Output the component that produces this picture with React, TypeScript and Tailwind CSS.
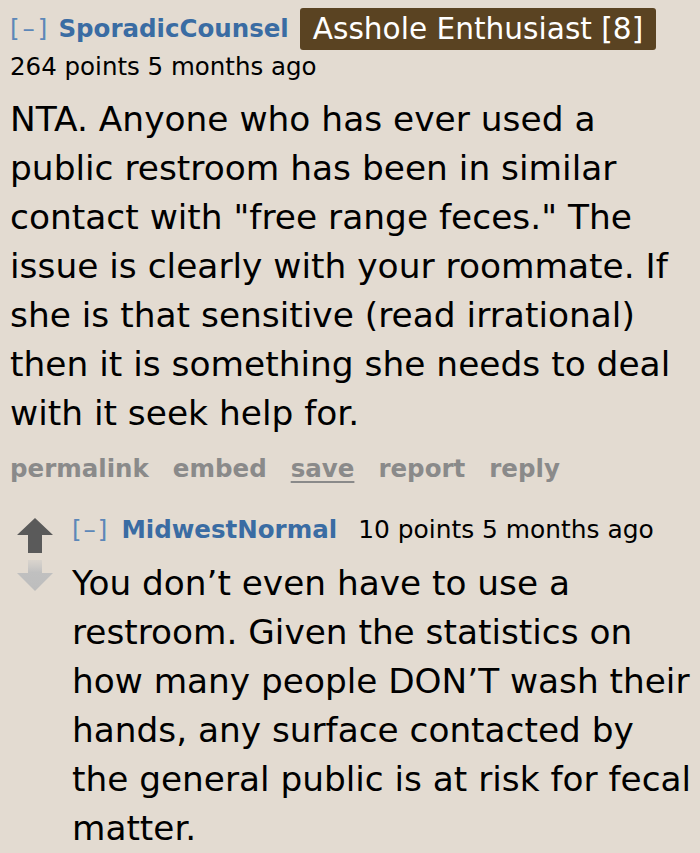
import React from "react";

const font = { fontFamily: '"DejaVu Sans", Verdana, sans-serif' };

function UpArrow() {
  return (
    <svg width="36" height="35" viewBox="0 0 36 35" className="block">
      <path d="M18 0 L36 17 L25 17 L25 35 L11 35 L11 17 L0 17 Z" fill="#5a5a5a" />
    </svg>
  );
}

function DownArrow() {
  return (
    <svg width="36" height="32" viewBox="0 0 36 32" className="block">
      <defs>
        <linearGradient id="fade" x1="0" y1="0" x2="0" y2="1">
          <stop offset="0" stopColor="#c4c4c4" stopOpacity="0.3" />
          <stop offset="0.4" stopColor="#c0c0c0" stopOpacity="1" />
          <stop offset="1" stopColor="#bdbdbd" stopOpacity="1" />
        </linearGradient>
      </defs>
      <path d="M11 0 L25 0 L25 13 L36 13 L18 31 L0 13 L11 13 Z" fill="url(#fade)" />
    </svg>
  );
}

export default function App() {
  return (
    <div className="w-[700px] h-[853px] overflow-hidden bg-[#e3dbd1] text-black" style={font}>
      <div className="pl-[10px] pt-[8px]">
        <div className="flex items-center h-[42px] whitespace-nowrap">
          <span className="text-[#5d87b8] text-[24.5px] tracking-[3px]">[–]</span>
          <span className="ml-[8px] text-[#3a6ca3] text-[24.5px] font-bold">SporadicCounsel</span>
          <span className="ml-[11px] bg-[#5a4322] text-white text-[29.6px] leading-[42px] h-[42px] px-[13px] rounded-[3px]">
            Asshole Enthusiast [8]
          </span>
        </div>
        <div className="text-[24.5px] leading-[34px] whitespace-nowrap">264 points 5 months ago</div>
        <div className="text-[34.4px] leading-[49px] mt-[11px] whitespace-nowrap">
          NTA. Anyone who has ever used a<br />
          public restroom has been in similar<br />
          contact with "free range feces." The<br />
          issue is clearly with your roommate. If<br />
          she is that sensitive (read irrational)<br />
          then it is something she needs to deal<br />
          with it seek help for.
        </div>
        <div className="flex gap-[24px] text-[24.5px] font-bold text-[#8a8a8a] mt-[16px] leading-[30px] whitespace-nowrap">
          <span>permalink</span>
          <span>embed</span>
          <span className="underline underline-offset-[4px]">save</span>
          <span>report</span>
          <span>reply</span>
        </div>
      </div>
      <div className="flex mt-[29px] pl-[17px]">
        <div className="flex flex-col w-[36px] pt-[5px] gap-[7px]">
          <UpArrow />
          <DownArrow />
        </div>
        <div className="ml-[19px] flex-1">
          <div className="flex items-baseline text-[24.5px] leading-[34px] whitespace-nowrap">
            <span className="text-[#5d87b8] tracking-[2px]">[–]</span>
            <span className="ml-[12px] text-[#3a6ca3] font-bold">MidwestNormal</span>
            <span className="ml-[21px] text-[24.9px]">10 points 5 months ago</span>
          </div>
          <div className="text-[34.3px] leading-[49px] mt-[12px] whitespace-nowrap">
            You don’t even have to use a<br />
            restroom. Given the statistics on<br />
            how many people DON’T wash their<br />
            hands, any surface contacted by<br />
            the general public is at risk for fecal<br />
            matter.
          </div>
        </div>
      </div>
    </div>
  );
}
